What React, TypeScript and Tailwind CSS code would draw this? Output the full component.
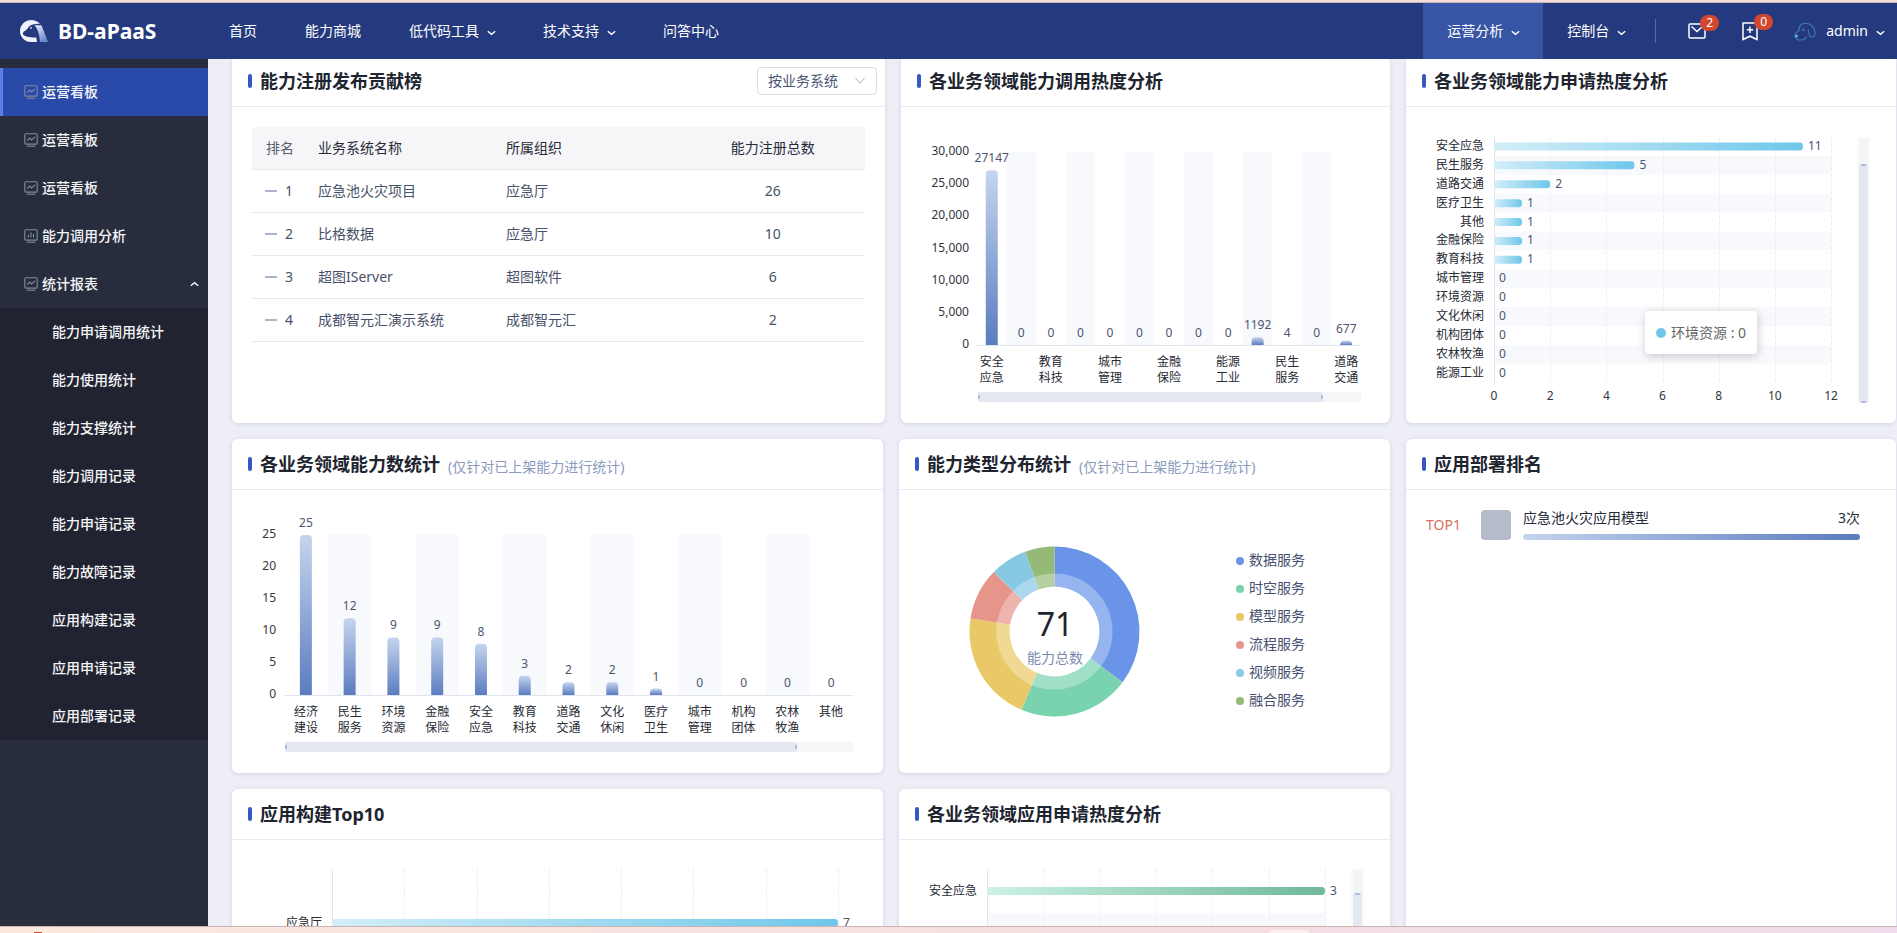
import React, { useState } from "react";

const FONT = "font-['Noto_Sans','Noto_Sans_CJK_SC',sans-serif]";

/* ---------- icons ---------- */

function Chevron({ up = false }: { up?: boolean }) {
  return (
    <svg width="9" height="6" viewBox="0 0 9 6" fill="none" stroke="currentColor" strokeWidth="1.400" aria-hidden="true">
      {up ? <path d="M0.800 4.800 L4.500 1.600 L8.200 4.800" /> : <path d="M0.800 1.200 L4.500 4.400 L8.200 1.200" />}
    </svg>
  );
}

function Logo() {
  return (
    <svg width="28" height="22" viewBox="0 0 28 22" aria-hidden="true">
      <defs>
        <linearGradient id="ear" x1="0" y1="0" x2="0.5" y2="1">
          <stop offset="0" stopColor="#e8eefb" />
          <stop offset="1" stopColor="#6f88cc" />
        </linearGradient>
      </defs>
      <path
        d="M20 3.800 C17.500 1.200 14.500 0 11 0 C5 0 0 5 0 11 C0 17 4.500 22 11 22 H17 L16.200 17.500 C12 18 5.500 16.800 3.200 14.800 C2.600 13 3.200 11.800 4.600 11 C7 10 7.200 8.600 8.600 7 C10.500 5 14 3.800 20 3.800 Z"
        fill="#eef2fb"
      />
      <circle cx="11" cy="7.800" r="0.900" fill="#eef2fb" />
      <path d="M14.500 5.200 H21.500 L28 22 H20 C19.500 15 18 9 14.500 5.200 Z" fill="url(#ear)" />
    </svg>
  );
}

function BoardIcon({ bars = false }: { bars?: boolean }) {
  return (
    <svg width="14" height="14" viewBox="0 0 14 14" fill="none" stroke="#848b9b" strokeWidth="1.100" aria-hidden="true">
      <rect x="0.800" y="0.700" width="12.400" height="10.400" rx="1" />
      {bars ? (
        <path d="M4.500 5.500 V8.500 M7 3.500 V8.500 M9.500 5 V8.500" />
      ) : (
        <path d="M3 7.800 L5.600 5 L7.600 7 L11 3.800" />
      )}
      <path d="M2.800 13.200 H11.200" />
    </svg>
  );
}

function MailIcon() {
  return (
    <svg width="18" height="16" viewBox="0 0 18 16" fill="none" stroke="#fff" strokeWidth="1.500" aria-hidden="true">
      <rect x="1" y="1" width="16" height="14" rx="1" />
      <path d="M3.500 3.500 L9 8.500 L14.500 3.500" />
    </svg>
  );
}

function BookmarkIcon() {
  return (
    <svg width="16" height="19" viewBox="0 0 16 19" fill="none" stroke="#fff" strokeWidth="1.500" aria-hidden="true">
      <path d="M1 1 H15 V17.500 L8 14.200 L1 17.500 Z" />
      <path d="M8 4.500 V11 M4.800 7.800 H11.200" />
    </svg>
  );
}

function Avatar() {
  return (
    <svg width="22" height="19" viewBox="0 0 22 19" fill="none" stroke="#3b74b8" strokeWidth="1.200" aria-hidden="true">
      <path d="M13 1.500 C8 0.500 4.500 3.500 5 8.500 C3 9.500 1 11 1 14 C1 17 3.500 18.300 7 18 C10 17.800 12 16.500 12.500 14.500" />
      <path d="M13 1.500 C17.500 1.500 21 6 21 10.500 C21 14 19.500 15.500 17.500 15 C15 14.500 14.500 11 14.200 7.500" />
      <circle cx="9.500" cy="8" r="0.600" />
      <circle cx="2.400" cy="14" r="1.600" fill="#4fb6e6" stroke="none" />
    </svg>
  );
}

/* ---------- header ---------- */

function NavLink({ label, menu = false, active = false }: { label: string; menu?: boolean; active?: boolean }) {
  return (
    <a
      href="#"
      className={
        active
          ? "flex h-full items-center gap-2 bg-[#3755a5] px-6 text-white"
          : "flex h-full items-center gap-2 px-6 text-white"
      }
    >
      {label}
      {menu && (
        <span className="w-2 pt-1">
          <Chevron />
        </span>
      )}
    </a>
  );
}

function Header() {
  return (
    <header className="z-10 flex h-14 shrink-0 items-center bg-[#253a7e] text-sm text-white">
      <a href="#" className="flex w-[205px] shrink-0 items-center gap-2.5 pl-5">
        <Logo />
        <span className="text-[21px] leading-7 font-bold">BD-aPaaS</span>
      </a>
      <nav className="flex h-full flex-1 items-center">
        <NavLink label="首页" />
        <NavLink label="能力商城" />
        <NavLink label="低代码工具" menu />
        <NavLink label="技术支持" menu />
        <NavLink label="问答中心" />
      </nav>
      <div className="flex h-full items-center">
        <NavLink label="运营分析" menu active />
        <NavLink label="控制台" menu />
        <span className="ml-1.5 h-6 w-px bg-[#566aa6]" />
        <button type="button" aria-label="消息" className="relative ml-8">
          <MailIcon />
          <span className="absolute -top-2 left-3 flex h-4 w-[19px] items-center justify-center rounded-full bg-[#d3472f] text-xs">
            2
          </span>
        </button>
        <button type="button" aria-label="收藏" className="relative ml-9">
          <BookmarkIcon />
          <span className="absolute -top-2 left-3 flex h-4 w-[19px] items-center justify-center rounded-full bg-[#d3472f] text-xs">
            0
          </span>
        </button>
        <button type="button" className="ml-9 flex items-center pr-3">
          <Avatar />
          <span className="ml-2.5 text-sm">admin</span>
          <span className="ml-2 pt-1">
            <Chevron />
          </span>
        </button>
      </div>
    </header>
  );
}

/* ---------- sidebar ---------- */

const SUB_ITEMS = [
  "能力申请调用统计",
  "能力使用统计",
  "能力支撑统计",
  "能力调用记录",
  "能力申请记录",
  "能力故障记录",
  "应用构建记录",
  "应用申请记录",
  "应用部署记录",
];

function SideItem({ label, active = false, bars = false }: { label: string; active?: boolean; bars?: boolean }) {
  return (
    <a
      href="#"
      className={
        active
          ? "flex h-12 items-center gap-1 border-l-3 border-[#5b7fe6] bg-[#294aa8] pl-[21px]"
          : "flex h-12 items-center gap-1 border-l-3 border-transparent pl-[21px]"
      }
    >
      <BoardIcon bars={bars} />
      {label}
    </a>
  );
}

function Sidebar() {
  const [open, setOpen] = useState(true);
  return (
    <aside className="w-52 shrink-0 overflow-hidden bg-[#282d3e] pt-[9px] text-sm font-medium text-[#f4f5f7]">
      <SideItem label="运营看板" active />
      <SideItem label="运营看板" />
      <SideItem label="运营看板" />
      <SideItem label="能力调用分析" bars />
      <button
        type="button"
        aria-expanded={open}
        onClick={() => setOpen(!open)}
        className="flex h-12 w-full items-center gap-1 pr-[9px] pl-6"
      >
        <BoardIcon />
        <span className="flex-1 text-left">统计报表</span>
        <Chevron up={open} />
      </button>
      {open && (
        <ul className="bg-[#212430]">
          {SUB_ITEMS.map((item) => (
            <li key={item}>
              <a href="#" className="flex h-12 items-center pl-[52px]">
                {item}
              </a>
            </li>
          ))}
        </ul>
      )}
    </aside>
  );
}

/* ---------- card ---------- */

function Card({
  title,
  note,
  extra,
  children,
}: {
  title: string;
  note?: string;
  extra?: React.ReactNode;
  children: React.ReactNode;
}) {
  return (
    <section className="flex min-w-0 flex-col rounded-md bg-white shadow-[0_1px_5px_rgba(50,60,140,0.16)]">
      <div className="flex h-[51px] shrink-0 items-center gap-2 border-b border-[#e8eaef] pr-2 pl-4">
        <span className="h-3.5 w-1 rounded-xs bg-[#3757c4]" />
        <h2 className="text-lg leading-6 font-bold text-[#20242f]">{title}</h2>
        {note && <span className="pt-1.5 text-sm text-[#8c9bbd]">{note}</span>}
        {extra && <div className="ml-auto">{extra}</div>}
      </div>
      {children}
    </section>
  );
}

/* ---------- ranking table ---------- */

const RANKING = [
  ["应急池火灾项目", "应急厅", 26],
  ["比格数据", "应急厅", 10],
  ["超图IServer", "超图软件", 6],
  ["成都智元汇演示系统", "成都智元汇", 2],
] as const;

function GroupSelect() {
  return (
    <div className="relative text-[#4b5675]">
      <select
        aria-label="统计维度"
        className="h-7 w-30 appearance-none rounded-sm border border-[#d8deea] bg-white pl-2.5 text-sm leading-5"
      >
        <option>按业务系统</option>
        <option>按组织</option>
      </select>
      <span className="pointer-events-none absolute top-2.5 right-3 text-[#aab4c8]">
        <svg width="10" height="8" viewBox="0 0 10 8" fill="none" stroke="currentColor" aria-hidden="true">
          <path d="M0.500 1 L5 6.500 L9.500 1" />
        </svg>
      </span>
    </div>
  );
}

function RankingTable() {
  return (
    <div className="min-h-[316px] p-5">
      <table className="w-full table-fixed border-collapse text-sm text-[#48516a]">
        <thead className="text-[#262b3a]">
          <tr className="h-[42px] border-b border-[#e6e8f0] bg-[#f6f6f9]">
            <th className="w-14 text-center font-normal text-[#565d70]">排名</th>
            <th className="w-[188px] pl-2.5 text-left font-normal">业务系统名称</th>
            <th className="pl-2.5 text-left font-normal">所属组织</th>
            <th className="text-center font-normal">能力注册总数</th>
          </tr>
        </thead>
        <tbody>
          {RANKING.map(([name, org, total], i) => (
            <tr key={name} className="h-[43px] border-b border-[#e6e8f0]">
              <td>
                <span className="flex items-center gap-2 pl-[13px]">
                  <span className="h-0.5 w-3 bg-[#a9b4cf]" />
                  {i + 1}
                </span>
              </td>
              <td className="pl-2.5">{name}</td>
              <td className="pl-2.5">{org}</td>
              <td className="text-center">{total}</td>
            </tr>
          ))}
        </tbody>
      </table>
    </div>
  );
}

/* ---------- charts ---------- */

type Datum = { name: string; value: number };

function ColumnChart({
  id,
  data,
  max,
  step,
  width,
  height,
  left,
  right,
  top,
  bottom,
  labelEvery = 1,
  zoomEnd,
}: {
  id: string;
  data: Datum[];
  max: number;
  step: number;
  width: number;
  height: number;
  left: number;
  right: number;
  top: number;
  bottom: number;
  labelEvery?: number;
  zoomEnd: number;
}) {
  const band = (right - left) / data.length;
  const ticks: number[] = [];
  for (let t = 0; t <= max; t += step) ticks.push(t);
  const y = (v: number) => bottom - ((bottom - top) * v) / max;
  const sliderTop = bottom + 47;
  return (
    <svg viewBox={`0 0 ${width} ${height}`} className="block w-full text-xs" role="img">
      <defs>
        <linearGradient id={id} x1="0" y1="0" x2="0" y2="1">
          <stop offset="0" stopColor="#c5d5ee" />
          <stop offset="1" stopColor="#5b7cbf" />
        </linearGradient>
      </defs>
      {data.map((d, i) =>
        i % 2 ? <rect key={d.name} x={left + band * i} y={top} width={band} height={bottom - top} fill="#f7f9fd" /> : null
      )}
      {ticks.map((t) => (
        <text key={t} x={left - 8} y={y(t) + 3} textAnchor="end" fill="#32363f">
          {t.toLocaleString("en-US")}
        </text>
      ))}
      {data.map((d, i) => {
        const cx = left + band * (i + 0.5);
        const h = bottom - y(d.value);
        const r = Math.min(4, h);
        return (
          <g key={d.name}>
            {h > 0.5 && (
              <path
                d={`M${cx - 6} ${bottom} V${bottom - h + r} Q${cx - 6} ${bottom - h} ${cx - 6 + r} ${bottom - h} H${cx + 6 - r} Q${cx + 6} ${bottom - h} ${cx + 6} ${bottom - h + r} V${bottom} Z`}
                fill={`url(#${id})`}
              />
            )}
            <text x={cx} y={bottom - h - 8} textAnchor="middle" fill="#4c5570">
              {d.value}
            </text>
            {i % labelEvery === 0 && (
              <>
                <text x={cx} y={bottom + 21} textAnchor="middle" fill="#262a33">
                  {d.name.slice(0, 2)}
                </text>
                <text x={cx} y={bottom + 37} textAnchor="middle" fill="#262a33">
                  {d.name.slice(2)}
                </text>
              </>
            )}
          </g>
        );
      })}
      <rect x={left} y={bottom} width={right - left} height="1" fill="#e0e4ee" />
      <rect x={left + 1} y={sliderTop} width={right - left - 1} height="10" rx="2" fill="#f6f7f9" />
      <rect x={left + 1} y={sliderTop} width={zoomEnd - left - 1} height="10" rx="1" fill="#e4e8f1" />
      <rect x={left + 1} y={sliderTop + 3} width="2" height="4" rx="1" fill="#adbad8" />
      <rect x={zoomEnd - 2} y={sliderTop + 3} width="2" height="4" rx="1" fill="#adbad8" />
    </svg>
  );
}

function RowChart({
  id,
  data,
  from,
  to,
  width,
  height,
  left,
  right,
  top,
  row,
  rows = data.length,
  max,
  ticks,
  barWidth = 8,
  stripes = true,
  showTicks = false,
  slider,
}: {
  id: string;
  data: Datum[];
  from: string;
  to: string;
  width: number;
  height: number;
  left: number;
  right: number;
  top: number;
  row: number;
  rows?: number;
  max: number;
  ticks: number;
  barWidth?: number;
  stripes?: boolean;
  showTicks?: boolean;
  slider?: { x: number; start: number; end: number };
}) {
  const unit = (right - left) / max;
  const bottom = top + row * rows;
  const lines = Array.from({ length: ticks }, (_, i) => i + 1);
  return (
    <svg viewBox={`0 0 ${width} ${height}`} className="block w-full text-xs" role="img">
      <defs>
        <linearGradient id={id} x1="0" y1="0" x2="1" y2="0">
          <stop offset="0" stopColor={from} />
          <stop offset="1" stopColor={to} />
        </linearGradient>
      </defs>
      {stripes &&
        Array.from({ length: rows }, (_, i) =>
          i % 2 ? <rect key={i} x={left} y={top + row * i} width={right - left} height={row} fill="#f7f9fd" /> : null
        )}
      {lines.map((i) => {
        const x = Math.round(left + ((right - left) * i) / ticks) + 0.5;
        return <path key={i} d={`M${x} ${top} V${bottom}`} stroke="#eceef1" strokeDasharray="4 2" />;
      })}
      <rect x={left} y={top} width="1" height={bottom - top + 1} fill="#e0e4ee" />
      {data.map((d, i) => {
        const cy = top + row * (i + 0.5);
        const end = left + unit * d.value;
        const h = barWidth / 2;
        return (
          <g key={d.name}>
            <text x={left - 10} y={Math.floor(cy + 4)} textAnchor="end" fill="#262a33">
              {d.name}
            </text>
            {d.value > 0 && (
              <path
                d={`M${left} ${cy - h} H${end - 3} Q${end} ${cy - h} ${end} ${cy} Q${end} ${cy + h} ${end - 3} ${cy + h} H${left} Z`}
                fill={`url(#${id})`}
              />
            )}
            <text x={end + 5} y={Math.floor(cy + 4)} fill="#4c5570">
              {d.value}
            </text>
          </g>
        );
      })}
      {showTicks &&
        [0, ...lines].map((i) => (
          <text key={i} x={left + ((right - left) * i) / ticks} y={bottom + 17} textAnchor="middle" fill="#32363f">
            {(max / ticks) * i}
          </text>
        ))}
      {slider && (
        <g>
          <rect x={slider.x - 2} y={top} width="13" height={slider.end - top} fill="#fafafb" />
          <rect x={slider.x} y={top + 1} width="9" height={slider.end - top - 1} rx="2" fill="#f4f5f7" />
          <rect x={slider.x} y={slider.start} width="9" height={slider.end - slider.start} rx="1" fill="#e4e8f1" />
          <rect x={slider.x + 2} y={slider.start} width="5" height="2" rx="1" fill="#adbad8" />
          <rect x={slider.x + 2} y={slider.end - 2} width="5" height="2" rx="1" fill="#adbad8" />
        </g>
      )}
    </svg>
  );
}

const CALLS: Datum[] = [
  { name: "安全应急", value: 27147 },
  { name: "医疗卫生", value: 0 },
  { name: "教育科技", value: 0 },
  { name: "文化休闲", value: 0 },
  { name: "城市管理", value: 0 },
  { name: "环境资源", value: 0 },
  { name: "金融保险", value: 0 },
  { name: "机构团体", value: 0 },
  { name: "能源工业", value: 0 },
  { name: "经济建设", value: 1192 },
  { name: "民生服务", value: 4 },
  { name: "农林牧渔", value: 0 },
  { name: "道路交通", value: 677 },
];

const COUNTS: Datum[] = [
  { name: "经济建设", value: 25 },
  { name: "民生服务", value: 12 },
  { name: "环境资源", value: 9 },
  { name: "金融保险", value: 9 },
  { name: "安全应急", value: 8 },
  { name: "教育科技", value: 3 },
  { name: "道路交通", value: 2 },
  { name: "文化休闲", value: 2 },
  { name: "医疗卫生", value: 1 },
  { name: "城市管理", value: 0 },
  { name: "机构团体", value: 0 },
  { name: "农林牧渔", value: 0 },
  { name: "其他", value: 0 },
];

const APPLIES: Datum[] = [
  { name: "安全应急", value: 11 },
  { name: "民生服务", value: 5 },
  { name: "道路交通", value: 2 },
  { name: "医疗卫生", value: 1 },
  { name: "其他", value: 1 },
  { name: "金融保险", value: 1 },
  { name: "教育科技", value: 1 },
  { name: "城市管理", value: 0 },
  { name: "环境资源", value: 0 },
  { name: "文化休闲", value: 0 },
  { name: "机构团体", value: 0 },
  { name: "农林牧渔", value: 0 },
  { name: "能源工业", value: 0 },
];

const TYPES = [
  { name: "数据服务", value: 25, color: "#6994e8" },
  { name: "时空服务", value: 15, color: "#78d3ae" },
  { name: "模型服务", value: 15, color: "#e9c967" },
  { name: "流程服务", value: 7, color: "#e5958a" },
  { name: "视频服务", value: 5, color: "#87c8e2" },
  { name: "融合服务", value: 4, color: "#95ba78" },
];

function ring(cx: number, cy: number, outer: number, inner: number, a: number, b: number) {
  const p = (r: number, t: number) => `${cx + r * Math.sin(t)} ${cy - r * Math.cos(t)}`;
  const large = b - a > Math.PI ? 1 : 0;
  return `M${p(outer, a)} A${outer} ${outer} 0 ${large} 1 ${p(outer, b)} L${p(inner, b)} A${inner} ${inner} 0 ${large} 0 ${p(inner, a)} Z`;
}

function DonutChart() {
  const cx = 155.5;
  const cy = 141.5;
  const total = TYPES.reduce((sum, t) => sum + t.value, 0);
  let angle = 0;
  return (
    <svg viewBox="0 0 491 283" className="block w-full text-sm" role="img">
      {TYPES.map((t) => {
        const start = angle;
        angle += (t.value / total) * Math.PI * 2;
        return <path key={t.name} d={ring(cx, cy, 85, 45, start, angle)} fill={t.color} />;
      })}
      <circle cx={cx} cy={cy} r="51.5" fill="none" stroke="#fff" strokeOpacity="0.3" strokeWidth="13" />
      <text x="156" y="146" textAnchor="middle" className="text-[32px]" fill="#20242f">
        {total}
      </text>
      <text x="156" y="173" textAnchor="middle" fill="#7d8bb0">
        能力总数
      </text>
      {TYPES.map((t, i) => (
        <g key={t.name}>
          <circle cx="341" cy={71 + i * 28} r="4" fill={t.color} />
          <text x="350" y={75 + i * 28} fill="#465070">
            {t.name}
          </text>
        </g>
      ))}
    </svg>
  );
}

function DeployRanking() {
  return (
    <ol className="p-5 text-sm">
      <li className="flex items-center">
        <span className="w-[55px] text-[#d9705f]">TOP1</span>
        <span className="size-[30px] rounded-sm bg-[#b6bbc9]" />
        <div className="mr-4 ml-3 flex flex-1 flex-col gap-2">
          <div className="flex justify-between leading-4 text-[#262b3a]">
            <span>应急池火灾应用模型</span>
            <span>3次</span>
          </div>
          <span className="h-1.5 rounded-full bg-linear-to-r from-[#c5d4ee] to-[#5b7bbd]" />
        </div>
      </li>
    </ol>
  );
}

/* ---------- page ---------- */

export default function App() {
  return (
    <div className={`flex h-screen flex-col overflow-hidden bg-[#eeeff6] ${FONT}`}>
      <div className="h-[3px] shrink-0 border-b border-[#cdb3ae] bg-[#f5dfdc]" />
      <Header />
      <div className="flex min-h-0 flex-1">
        <Sidebar />
        <main className="min-w-0 flex-1 overflow-hidden pr-px pl-6">
          <div className="-mt-[3px] flex flex-col gap-4">
            <div className="grid grid-cols-[653fr_489fr_490fr] gap-4">
              <Card title="能力注册发布贡献榜" extra={<GroupSelect />}>
                <RankingTable />
              </Card>
              <Card title="各业务领域能力调用热度分析">
                <ColumnChart
                  id="calls"
                  data={CALLS}
                  max={30000}
                  step={5000}
                  width={489}
                  height={316}
                  left={76}
                  right={460}
                  top={45}
                  bottom={238}
                  labelEvery={2}
                  zoomEnd={422}
                />
              </Card>
              <Card title="各业务领域能力申请热度分析">
                <div className="relative">
                  <RowChart
                    id="applies"
                    data={APPLIES}
                    from="#d3eef8"
                    to="#6ec7ea"
                    width={490}
                    height={316}
                    left={88}
                    right={425}
                    top={30}
                    row={18.9}
                    max={12}
                    ticks={6}
                    showTicks
                    slider={{ x: 453, start: 57, end: 296 }}
                  />
                  <div className="absolute top-[204px] left-[239px] flex h-[43px] items-center gap-[5px] rounded-sm bg-white px-[11px] text-sm text-[#666] shadow-[1px_2px_10px_rgba(0,0,0,0.2)]">
                    <span className="size-2.5 rounded-full bg-[#6ec7ea]" />
                    环境资源 : 0
                  </div>
                </div>
              </Card>
            </div>

            <div className="grid grid-cols-[1158fr_490fr] gap-4">
              <div className="grid min-w-0 grid-cols-[651fr_491fr] gap-4">
                <Card title="各业务领域能力数统计" note="(仅针对已上架能力进行统计)">
                  <ColumnChart
                    id="counts"
                    data={COUNTS}
                    max={25}
                    step={5}
                    width={651}
                    height={283}
                    left={52}
                    right={621}
                    top={45}
                    bottom={205}
                    zoomEnd={565}
                  />
                </Card>
                <Card title="能力类型分布统计" note="(仅针对已上架能力进行统计)">
                  <DonutChart />
                </Card>
                <Card title="应用构建Top10">
                  <RowChart
                    id="builds"
                    data={[{ name: "应急厅", value: 7 }]}
                    from="#d3eef8"
                    to="#6ec7ea"
                    width={651}
                    height={283}
                    left={100}
                    right={606}
                    top={29}
                    row={108}
                    max={7}
                    ticks={7}
                    stripes={false}
                  />
                </Card>
                <Card title="各业务领域应用申请热度分析">
                  <RowChart
                    id="appApplies"
                    data={[{ name: "安全应急", value: 3 }]}
                    from="#ccf2e3"
                    to="#6fb89b"
                    width={491}
                    height={283}
                    left={88}
                    right={426}
                    top={29}
                    row={44}
                    rows={5}
                    max={3}
                    ticks={6}
                    slider={{ x: 454, start: 53, end: 250 }}
                  />
                </Card>
              </div>
              <Card title="应用部署排名">
                <DeployRanking />
              </Card>
            </div>
          </div>
        </main>
      </div>
      <footer className="flex h-[7px] shrink-0 items-end border-t border-[#c9b4b4] bg-linear-to-r from-[#fbe8de] via-[#f8e0e0] to-[#efdcea]">
        <div className="flex w-[69%] items-end justify-between pl-[34px]">
          <span className="h-px w-2 bg-[#d3472f]" />
          <span className="h-[3px] w-10 rounded-t-sm bg-[#f9efee]" />
        </div>
      </footer>
    </div>
  );
}
